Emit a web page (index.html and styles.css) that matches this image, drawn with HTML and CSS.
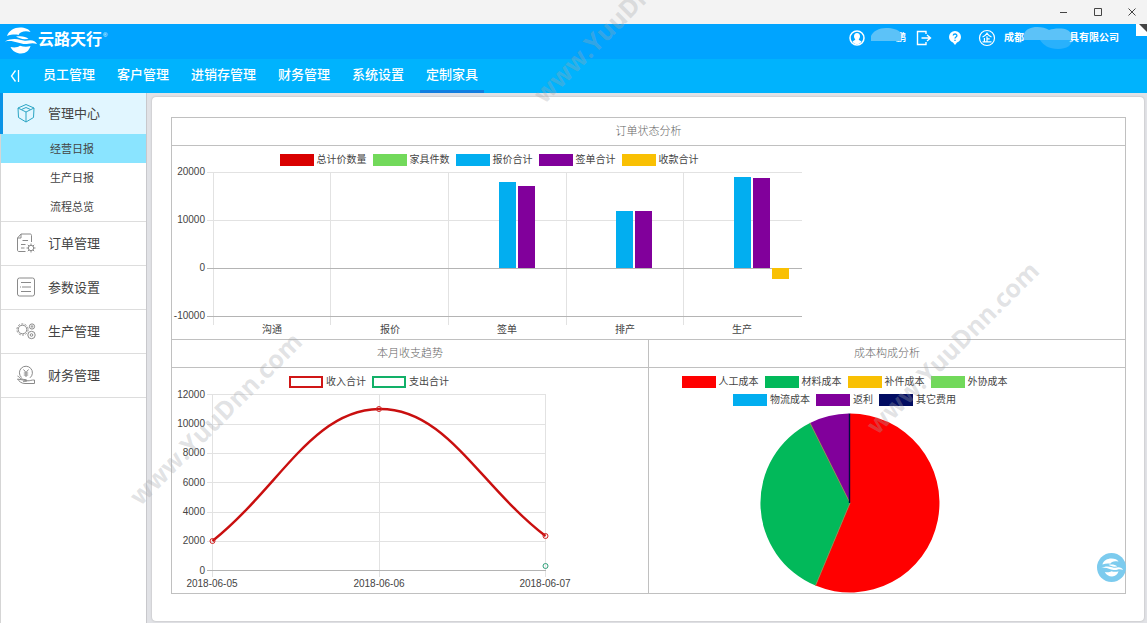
FILE: index.html
```html
<!DOCTYPE html>
<html lang="zh-CN">
<head>
<meta charset="utf-8">
<title>云路天行</title>
<link rel="stylesheet" href="styles.css">
</head>
<body>
<svg class="defs" aria-hidden="true">
  <symbol id="logo" viewBox="0 0 32 27">
    <path d="M2 9C4 3.500 9 .5 15 .5c5 0 9 1.500 10.500 4.500-5-1.500-10.500-.5-12 3C11 7.300 6 7.500 2 9z"/>
    <path d="M0 14.500C5 11.500 11 11.500 16 13c4 1.200 6 .8 9 .3 3.500 0 6 1.700 7 3.700-3-1.200-6-1-8.500-.3-4 1-7 0-11-1.200-4-1.300-8-2-12.500-1z"/>
    <path d="M11 9.500c5-.8 10-.2 12.500 2.500l-4 .3c-3-.3-6-1.500-8.500-2.800z"/>
    <path d="M5.500 20c4 .8 7.500.3 9.500-1.200 3.500 1 7 1.400 10.500.2-1.500 4.600-4.500 7.500-9.500 7.500-4.500 0-8.500-2.300-10.500-6.500z"/>
  </symbol>
</svg>
<div class="shell">
  <div class="titlebar">
    <button class="win" aria-label="最小化"><svg width="10" height="10"><path d="M1 5.500h7"/></svg></button>
    <button class="win" aria-label="最大化"><svg width="10" height="10"><path d="M1.500 1.500h7v7h-7z"/></svg></button>
    <button class="win" aria-label="关闭"><svg width="10" height="10"><path d="M1.500 1.500l7 7M8.500 1.500l-7 7"/></svg></button>
  </div>

  <header class="header">
    <a class="brand" href="#"><svg class="brand-logo"><use href="#logo"/></svg><span>云路天行</span><sup>®</sup></a>
    <div class="account">
      <a class="user" href="#">
        <svg width="16" height="16" viewBox="0 0 16 16"><circle cx="8" cy="8" r="7" fill="none" stroke="#fff" stroke-width="1.500"/><path fill="#fff" d="M8 3c2 0 3 1.300 3 3.200 0 1.500-.6 2.400-1.300 3.100.2 1.200 2 1.300 2.800 2.200C11.500 13.400 9.900 14 8 14s-3.500-.6-4.500-2.500c.8-.9 2.600-1 2.800-2.200C5.600 8.600 5 7.700 5 6.200 5 4.300 6 3 8 3z"/></svg>
        <span class="name">鹏<svg class="mask" width="31" height="13" viewBox="0 0 31 13"><path d="M0 13V8C2 3 8 0 15 0s12 2 14 4c1 1 1 2 1 4v5z"/></svg></span>
      </a>
      <button class="tool" aria-label="退出"><svg width="16" height="16" viewBox="0 0 16 16" fill="none" stroke="#fff" stroke-width="1.400"><path d="M10 4V1.500H1.500v13H10V12M5.500 8H14M11 5l3.500 3-3.500 3"/></svg></button>
      <button class="tool" aria-label="帮助"><svg width="14" height="16" viewBox="0 0 14 16"><path fill="#fff" d="M7 1a6 6 0 0 1 6 6c0 3-2 4.800-4 5.600L7 15l-2-2.400C3 11.800 1 10 1 7a6 6 0 0 1 6-6z"/><path fill="none" stroke="#00a4ff" stroke-width="1.300" d="M5.200 5.500C5.300 3.500 9 3.500 8.900 5.600 8.800 7 7 7 7 8.600M7 9.700V11"/></svg></button>
      <a class="company" href="#">
        <svg width="18" height="18" viewBox="0 0 18 18" fill="none" stroke="#fff" stroke-width="1.200"><circle cx="9" cy="9" r="7.500"/><path d="M4.500 8C7 7 8.300 5.500 9 4.300 9.700 5.500 11 7 13.500 8M9 7.200v5.600M6.400 9v3.800M9 9.800h2.700M4.500 12.900h9"/></svg>
        <span class="company-name">成都<svg class="gap" width="50" height="24" viewBox="0 0 50 24"><path d="M1 14V8C3 3 8 1 14 1c5 0 9 1 12 3 3-1 6-1.500 10-1.500 7 0 11 2 12 5.500V14z"/><path d="M17 14h32c0 5-5 9-14 9-9 0-15-4-18-9z" opacity=".45"/></svg>具有限公司</span>
      </a>
    </div>
    <svg class="corner" width="11" height="12" viewBox="0 0 11 12"><path fill="#fff" d="M0 0h11v12H0z"/><path fill="#444" d="M3 0h8v8z"/></svg>
  </header>

  <nav class="topnav" aria-label="主导航">
    <button class="collapse" aria-label="收起"><svg width="10" height="14" viewBox="0 0 10 14"><path d="M5.500 1.500l-4 5.500 4 5.500M8.500 1v12"/></svg></button>
    <a href="#">员工管理</a>
    <a href="#">客户管理</a>
    <a href="#">进销存管理</a>
    <a href="#">财务管理</a>
    <a href="#">系统设置</a>
    <a href="#" class="current">定制家具</a>
  </nav>

  <div class="body">
    <nav class="sidebar" aria-label="侧边导航">
      <a class="group active" href="#"><svg class="icon" viewBox="0 0 20 20"><path d="M10 1.500l8 3.500-.5 9.500-7.500 4.500-7.500-4.500L2 5zM2 5l8 4 8-4M10 9v10M5.500 6.500L10 4.500l4.500 2"/></svg>管理中心</a>
      <div class="subs">
        <a class="sub selected" href="#">经营日报</a>
        <a class="sub" href="#">生产日报</a>
        <a class="sub" href="#">流程总览</a>
      </div>
      <a class="group" href="#"><svg class="icon" viewBox="0 0 20 20"><path d="M9.500 18.500H3c-1 0-1.500-.5-1.500-1.500V5L5 1h9c1 0 1.500.5 1.500 1.500V9M5 1v4H1.500M6.500 7.500H12M5 11.500h4.500M5 15h3.500"/><circle cx="15" cy="15" r="2.700"/><path d="M15 10.500v1.800M15 17.700v1.800M10.500 15h1.800M17.700 15h1.800M11.800 11.800l1.300 1.300M16.900 16.900l1.300 1.300M18.200 11.800l-1.300 1.300M13.100 16.900l-1.300 1.300"/></svg>订单管理</a>
      <a class="group" href="#"><svg class="icon" viewBox="0 0 20 20"><rect x="1.500" y="1" width="17" height="18" rx="2"/><path d="M5 5.500h10M4 10h1M6 10h9M5 14.500h10"/></svg>参数设置</a>
      <a class="group" href="#"><svg class="icon" viewBox="0 0 20 20"><circle cx="6.500" cy="8.500" r="4.300"/><circle cx="6.500" cy="8.500" r="5.600" stroke-dasharray="2 1.500"/><circle cx="16" cy="5.500" r="2.600"/><circle cx="16" cy="5.500" r=".8"/><circle cx="15.500" cy="14" r="3.700"/><circle cx="15.500" cy="14" r="1.300"/></svg>生产管理</a>
      <a class="group" href="#"><svg class="icon" viewBox="0 0 20 20"><path d="M5.500 12.500A6.500 6.500 0 1 1 14 12.800M7.500 4.500L10 7.500l2.500-3M10 7.500V12M7.800 8h4.400M7.800 10h4.400M1.500 11c1 .3 2 1.500 3.500 2.800 2 .7 3.500.7 5.500 1 1 .7.500 1.500-.5 1.500H7M11.500 15.800c2.500.2 4-1 7-.8v3.500H9c-4 0-6-2.500-7.500-4.500z"/></svg>财务管理</a>
    </nav>

    <main class="main">
      <div class="card">
        <div class="report">
          <section class="panel wide">
            <h2>订单状态分析</h2>
            <div class="canvas canvas-bar">
              <ul class="legend">
                <li><i class="sw red-dark"></i>总计价数量</li>
                <li><i class="sw lime"></i>家具件数</li>
                <li><i class="sw blue"></i>报价合计</li>
                <li><i class="sw purple"></i>签单合计</li>
                <li><i class="sw amber"></i>收款合计</li>
              </ul>
              <svg class="chart" width="640" height="173" role="img" aria-label="订单状态分析柱状图">
                <path class="grid" d="M35 6.500H630M35 54.500H630M158.500 6V159M276.500 6V159M394.500 6V159M511.500 6V159M41.500 6V159"/>
                <path class="axis" d="M35 150.500H630M35 102.500H630"/>
                <g class="c-blue"><rect x="327" y="16" width="17" height="86"/><rect x="444" y="45" width="17" height="57"/><rect x="562" y="11" width="17" height="91"/></g>
                <g class="c-purple"><rect x="346" y="20" width="17" height="82"/><rect x="463" y="45" width="17" height="57"/><rect x="581" y="12" width="17" height="90"/></g>
                <rect class="c-amber" x="600" y="102" width="17" height="11"/>
                <g class="ticks-y"><text x="33" y="9">20000</text><text x="33" y="57">10000</text><text x="33" y="105">0</text><text x="33" y="153">-10000</text></g>
                <g class="ticks-x"><text x="100" y="167">沟通</text><text x="218" y="167">报价</text><text x="335" y="167">签单</text><text x="453" y="167">排产</text><text x="570" y="167">生产</text></g>
              </svg>
            </div>
          </section>

          <section class="panel">
            <h2>本月收支趋势</h2>
            <div class="canvas canvas-line">
              <ul class="legend">
                <li><i class="sw outline-red"></i>收入合计</li>
                <li><i class="sw outline-green"></i>支出合计</li>
              </ul>
              <svg class="chart" width="400" height="205" role="img" aria-label="本月收支趋势折线图">
                <path class="grid" d="M35 6.500H374M35 36.500H374M35 65.500H374M35 94.500H374M35 124.500H374M35 153.500H374M40.500 6V189M207.500 6V189M373.500 6V189"/>
                <path class="axis" d="M35 182.500H374"/>
                <path class="line" d="M40.500 153C107 100 140 22 207 21S307 97 373.500 148"/>
                <g class="dots"><circle cx="40.500" cy="153" r="2.500"/><circle cx="207" cy="21" r="2.500"/><circle cx="373.500" cy="148" r="2.500"/></g>
                <circle class="dot-green" cx="373.500" cy="178" r="2.500"/>
                <g class="ticks-y"><text x="33" y="10">12000</text><text x="33" y="39">10000</text><text x="33" y="68">8000</text><text x="33" y="98">6000</text><text x="33" y="127">4000</text><text x="33" y="156">2000</text><text x="33" y="186">0</text></g>
                <g class="ticks-x"><text x="40" y="199">2018-06-05</text><text x="207" y="199">2018-06-06</text><text x="373" y="199">2018-06-07</text></g>
              </svg>
            </div>
          </section>

          <section class="panel">
            <h2>成本构成分析</h2>
            <div class="canvas canvas-pie">
              <ul class="legend">
                <li><i class="sw red"></i>人工成本</li>
                <li><i class="sw green"></i>材料成本</li>
                <li><i class="sw amber"></i>补件成本</li>
                <li><i class="sw lime"></i>外协成本</li>
                <li><i class="sw blue"></i>物流成本</li>
                <li><i class="sw purple"></i>返利</li>
                <li><i class="sw navy"></i>其它费用</li>
              </ul>
              <svg class="pie" width="180" height="180" viewBox="-90 -90 180 180" role="img" aria-label="成本构成分析饼图">
                <path class="c-red" d="M0 0V-89.500A89.500 89.500 0 1 1-34.500 82.600z"/>
                <path class="c-green" d="M0 0L-34.500 82.600A89.500 89.500 0 0 1-40-80.100z"/>
                <path class="c-purple" d="M0 0L-40-80.100A89.500 89.500 0 0 1-1-89.500z"/>
                <path class="split" d="M-34.500 82.600L0 0L-40-80.100"/>
                <path class="split-navy" d="M-.5 0V-89.500"/>
              </svg>
            </div>
          </section>
        </div>
      </div>
    </main>
  </div>

  <button class="float" aria-label="云路天行"><svg width="22" height="19"><use href="#logo"/></svg></button>
  <div class="watermarks" aria-hidden="true">
    <span class="wm wm-a">www.YuuDnn.com</span>
    <span class="wm wm-b">www.YuuDnn.com</span>
    <span class="wm wm-c">www.YuuDnn.com</span>
  </div>
</div>
</body>
</html>
```
FILE: styles.css
```css
* { box-sizing: border-box; }
body {
  margin: 0;
  font-family: "Liberation Sans", "Noto Sans CJK SC", sans-serif;
  color: #444;
}
a { color: inherit; text-decoration: none; }
button { border: 0; padding: 0; background: none; cursor: pointer; }
svg { display: block; flex: none; }
ul { list-style: none; margin: 0; padding: 0; }
.defs { position: absolute; width: 0; height: 0; }

.shell {
  position: relative;
  display: flex;
  flex-direction: column;
  min-height: 100vh;
  overflow: hidden;
}

/* window bar */
.titlebar {
  display: flex;
  justify-content: flex-end;
  align-items: center;
  gap: 24px;
  height: 24px;
  padding-right: 10px;
  background: #f3f3f3;
}
.win svg { fill: none; stroke: #444; }

/* header */
.header {
  position: relative;
  display: flex;
  justify-content: space-between;
  align-items: center;
  height: 35px;
  padding: 0 28px 3px 5px;
  background: #00a4ff;
  color: #fff;
}
.brand { display: flex; align-items: center; gap: 1px; font-size: 16px; font-weight: 700; line-height: 20px; }
.brand-logo { width: 32px; height: 27px; fill: #fff; }
.brand sup { align-self: flex-start; margin-top: 4px; font-size: 6px; line-height: 8px; font-weight: 400; }
.account { display: flex; align-items: center; padding-bottom: 4px; font-size: 10px; font-weight: 700; }
.user { display: flex; align-items: center; gap: 31px; margin-right: 10px; }
.name { position: relative; line-height: 16px; }
.mask { position: absolute; right: 4px; top: -2px; fill: #5cc2f8; }
.tool { margin-right: 16px; }
.company { display: flex; align-items: center; gap: 8px; }
.company-name { display: flex; align-items: center; line-height: 16px; }
.company-name .gap { margin: -4px -4px -4px -1px; fill: #5cc2f8; z-index: 1; }
.corner { position: absolute; top: 0; right: 0; }

/* top navigation */
.topnav {
  display: flex;
  align-items: stretch;
  gap: 10px;
  height: 34px;
  padding-left: 10px;
  background: #00b3fd;
  color: #fff;
  font-size: 13px;
  font-weight: 500;
}
.collapse { margin-right: 7px; }
.collapse svg { fill: none; stroke: #fff; stroke-width: 1.3; }
.topnav a { padding: 0 6px; line-height: 32px; border-bottom: 3px solid transparent; }
.topnav .current { border-color: #127fe0; }

/* body */
.body { flex: 1; display: flex; background: #e1e2e6; }
.sidebar {
  width: 147px;
  flex: none;
  background: #fff;
  border-left: 1px solid #d5d5d5;
  border-right: 1px solid #c8c8cc;
  font-size: 13px;
}
.group {
  display: flex;
  align-items: center;
  gap: 12px;
  height: 44px;
  padding: 0 0 2px 15px;
  border-bottom: 1px solid #ddd;
}
.group.active {
  height: 41px;
  margin-left: -1px;
  padding-left: 13px;
  border-left: 3px solid #0a93e6;
  border-bottom: 0;
  background: #e1f6ff;
}
.icon { width: 20px; height: 20px; fill: none; stroke: #8a8a8a; stroke-width: 1; }
.active .icon { stroke: #2ba5c4; }
.subs { border-bottom: 1px solid #ddd; }
.sub { display: block; padding: 2px 0 0 49px; font-size: 11px; line-height: 27px; }
.selected { background: #8ae4ff; }

.main { flex: 1; min-width: 0; padding: 4px 3px 2px 5px; }
.card {
  height: 100%;
  padding: 20px 18px 27px 19px;
  background: #fff;
  border-radius: 4px;
  box-shadow: 0 0 2px #aaa;
}
.report {
  display: grid;
  grid-template-columns: 1fr 1fr;
  gap: 1px;
  padding: 1px;
  background: #c0c0c0;
}
.panel { min-width: 0; background: #fff; }
.wide { grid-column: 1 / -1; }
.panel h2 {
  margin: 0;
  border-bottom: 1px solid #c0c0c0;
  color: #666;
  font-size: 11px;
  font-weight: 300;
  line-height: 27px;
  text-align: center;
}
.canvas { padding-top: 8px; }
.canvas-bar { width: 640px; }
.canvas-line { width: 400px; }
.canvas-pie { width: 401px; }
.legend {
  display: flex;
  flex-wrap: wrap;
  justify-content: center;
  row-gap: 6px;
  font-size: 10px;
  line-height: 12px;
  color: #444;
}
.canvas-pie .legend { padding-right: 4px; }
.legend li { display: flex; gap: 3px; margin-right: 6px; }
.sw { width: 34px; height: 12px; }
.red-dark { background: #d90000; }
.red { background: #f00; }
.lime { background: #72d95b; }
.blue { background: #02aef0; }
.purple { background: #81009b; }
.amber { background: #f9c003; }
.green { background: #02b95a; }
.navy { background: #020d62; }
.outline-red { border: 2px solid #d01616; }
.outline-green { border: 2px solid #12b068; }

.chart { overflow: visible; font-size: 10px; fill: #444; }
.grid { stroke: #e2e2e2; }
.axis { stroke: #b4b4b4; }
.ticks-y { text-anchor: end; }
.ticks-x { text-anchor: middle; }
.line { fill: none; stroke: #c90f0f; stroke-width: 2.4; }
.dots { fill: none; stroke: #d02020; }
.dot-green { fill: none; stroke: #2fa07a; }
.c-blue { fill: #02aef0; }
.c-purple { fill: #81009b; }
.c-amber { fill: #f9c003; }
.c-red { fill: #f00; }
.c-green { fill: #02b95a; }
.split { fill: none; stroke: #8a8a50; stroke-width: 1; }
.split-navy { stroke: #020d42; stroke-width: 1.4; }
.pie { margin: 7px auto 0; }

/* overlays */
.float {
  position: absolute;
  right: 21px;
  bottom: 41px;
  display: grid;
  place-items: center;
  width: 29px;
  height: 29px;
  border-radius: 50%;
  background: #7ccbee;
}
.float svg { fill: #fff; }
.watermarks { position: absolute; inset: 0; overflow: hidden; pointer-events: none; }
.wm {
  position: absolute;
  color: rgba(165, 168, 172, .32);
  font: 700 25px/32px "Open Sans", sans-serif;
  transform: translate(-50%, -50%) rotate(-45deg);
}
.wm-a { left: 215px; top: 418px; }
.wm-b { left: 952px; top: 347px; }
.wm-c { left: 619px; top: 16px; }
```
